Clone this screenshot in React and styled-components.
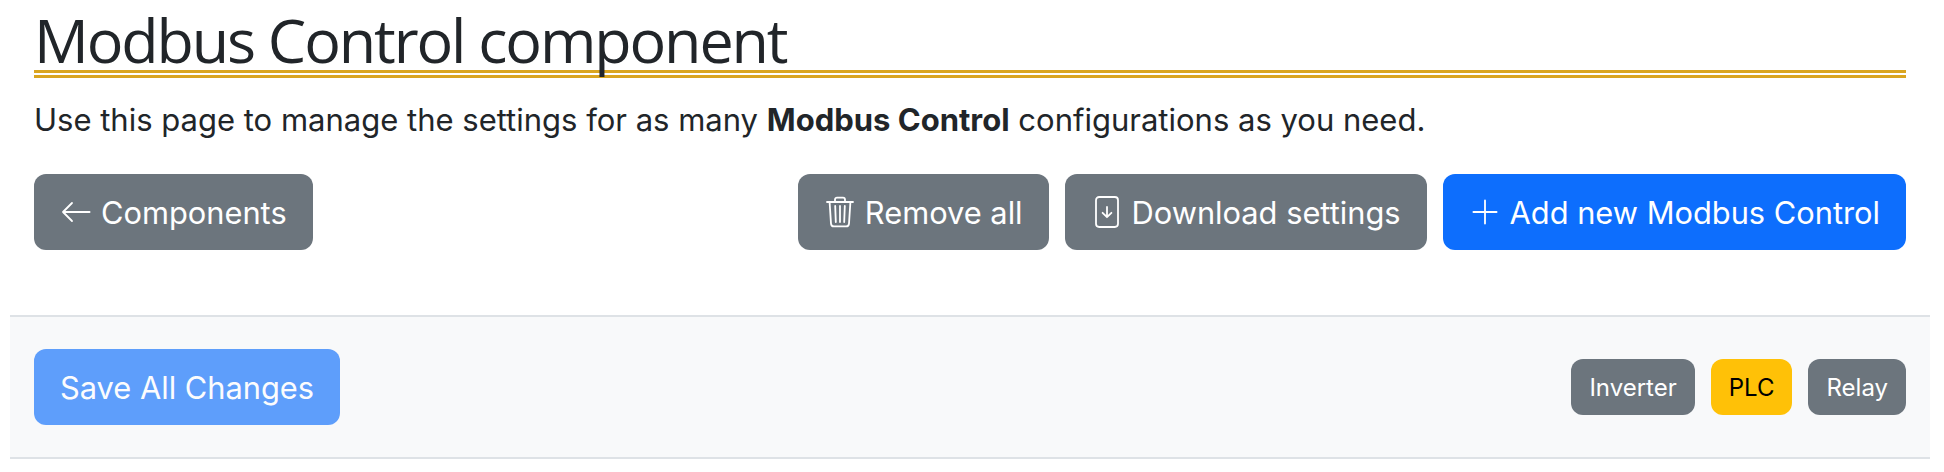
import styled, { createGlobalStyle } from 'styled-components';

const GlobalStyle = createGlobalStyle`
  body {
    margin: 0;
    background: #fff;
    font-family: Inter, "Liberation Sans", sans-serif;
    color: #212529;
  }
`;

const Page = styled.div`
  padding: 0 14px 0 10px;
`;

const Header = styled.header`
  padding: 0 24px 65px;
`;

const Title = styled.h1`
  margin: 0;
  height: 70px;
  font-family: "Open Sans", sans-serif;
  font-weight: 400;
  font-size: 61px;
  line-height: 80px;
  letter-spacing: -2.1px;
  color: #212529;
`;

const TitleRule = styled.div`
  border-bottom: 8px double goldenrod;
`;

const Intro = styled.p`
  margin: 19px 0 0;
  font-size: 31px;
  line-height: 46px;
  strong {
    font-weight: 700;
  }
`;

const Actions = styled.div`
  display: flex;
  align-items: center;
  gap: 16px;
  margin-top: 31px;
`;

const Spacer = styled.div`
  flex: 1;
`;

const Button = styled.button`
  display: inline-flex;
  align-items: center;
  gap: 9px;
  height: 76px;
  padding: 0 26px;
  border: 0;
  border-radius: 12px;
  font-family: inherit;
  font-size: 30.8px;
  color: #fff;
  background: ${(p) => (p.$variant === 'primary' ? '#0d6efd' : '#6c757d')};
  opacity: ${(p) => (p.$faded ? 0.65 : 1)};
`;

const SaveBar = styled.section`
  display: flex;
  align-items: center;
  justify-content: space-between;
  height: 140px;
  padding: 0 24px;
  background: #f8f9fa;
  border-top: 2px solid #dee2e6;
  border-bottom: 2px solid #dee2e6;
`;

const Filters = styled.div`
  display: flex;
  gap: 16px;
`;

const Filter = styled.button`
  height: 56px;
  padding: 0 18px;
  border: 0;
  border-radius: 12px;
  font-family: inherit;
  font-size: 24px;
  color: ${(p) => (p.$active ? '#000' : '#fff')};
  background: ${(p) => (p.$active ? '#ffc107' : '#6c757d')};
`;

const Icon = styled.svg`
  width: 32px;
  height: 32px;
  flex: none;
  fill: none;
  stroke: currentColor;
  stroke-width: 0.9;
  stroke-linecap: round;
  stroke-linejoin: round;
`;

const ArrowLeft = () => (
  <Icon viewBox="0 0 16 16">
    <path d="M14.8 8H1.5M6 3.5 1.5 8 6 12.5" />
  </Icon>
);

const Trash = () => (
  <Icon viewBox="0 0 16 16">
    <path d="M1.5 3h13M5.5 3V1.8a1 1 0 0 1 1-1h3a1 1 0 0 1 1 1V3" />
    <path d="M2.8 3l.7 10.8A1.5 1.5 0 0 0 5 15.2h6a1.5 1.5 0 0 0 1.5-1.4L13.2 3" />
    <path d="M5.6 5l.3 8M8 5v8M10.4 5l-.3 8" />
  </Icon>
);

const FileDown = () => (
  <Icon viewBox="0 0 16 16">
    <rect x="2.5" y="0.5" width="11" height="15" rx="1.6" />
    <path d="M8 5.5v5M5.8 8.4 8 10.6l2.2-2.2" />
  </Icon>
);

const Plus = () => (
  <Icon viewBox="0 0 16 16">
    <path d="M8 2.2v11.6M2.2 8h11.6" />
  </Icon>
);

export default function App() {
  return (
    <Page>
      <GlobalStyle />
      <Header>
        <Title>Modbus Control component</Title>
        <TitleRule />
        <Intro>
          Use this page to manage the settings for as many <strong>Modbus Control</strong> configurations as you need.
        </Intro>
        <Actions>
          <Button><ArrowLeft /> Components</Button>
          <Spacer />
          <Button><Trash /> Remove all</Button>
          <Button><FileDown /> Download settings</Button>
          <Button $variant="primary"><Plus /> Add new Modbus Control</Button>
        </Actions>
      </Header>
      <SaveBar>
        <Button $variant="primary" $faded>Save All Changes</Button>
        <Filters>
          <Filter>Inverter</Filter>
          <Filter $active>PLC</Filter>
          <Filter>Relay</Filter>
        </Filters>
      </SaveBar>
    </Page>
  );
}
